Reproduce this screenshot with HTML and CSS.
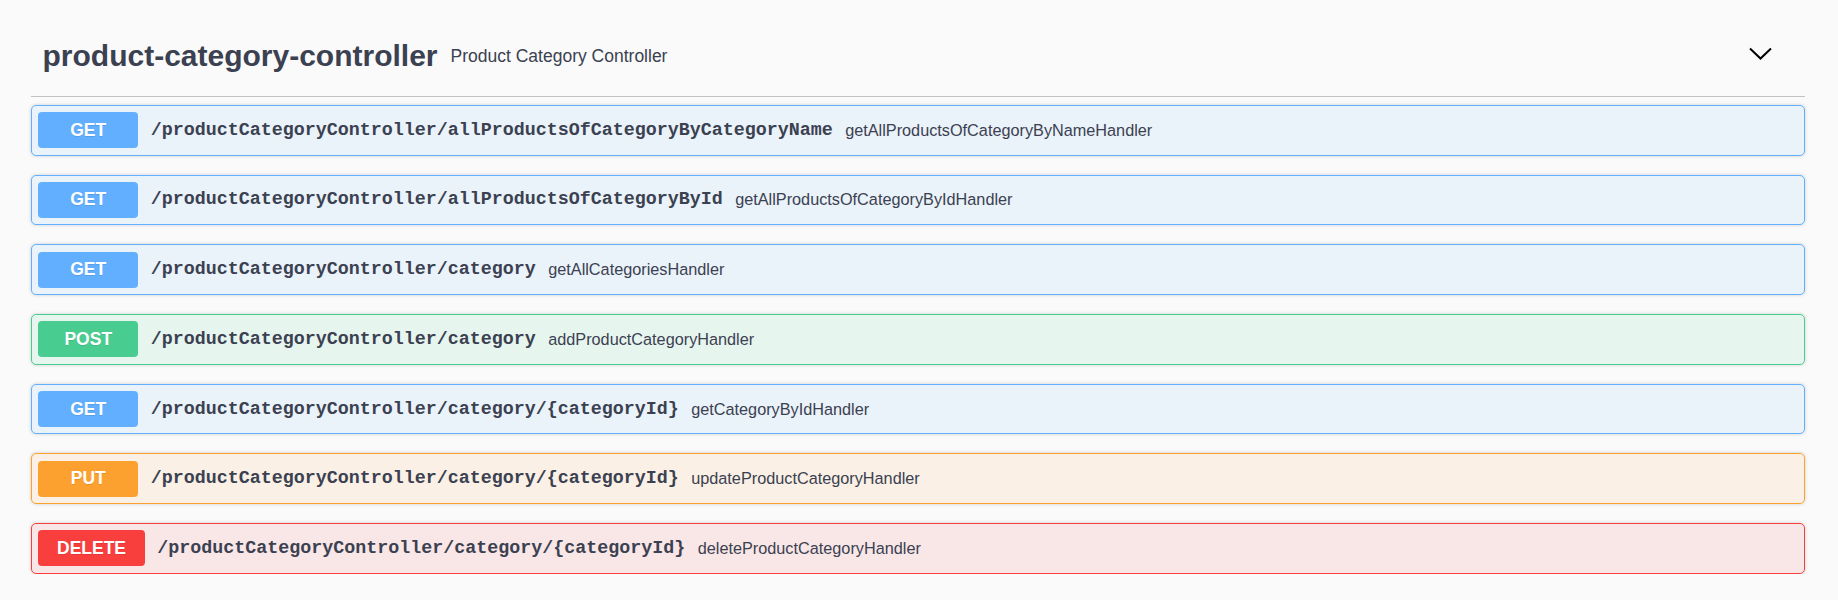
FILE: index.html
```html
<!DOCTYPE html>
<html lang="en">
<head>
<meta charset="utf-8">
<title>product-category-controller</title>
<link rel="stylesheet" href="styles.css">
</head>
<body>
<div class="wrapper">
  <section class="tag-section">
    <h3 class="tag">
      <span class="tag-name">product-category-controller</span>
      <small class="tag-desc">Product Category Controller</small>
      <span class="spacer"></span>
      <svg class="chevron" width="23" height="13" viewBox="0 0 23 13" aria-hidden="true">
        <polyline points="1,1.5 11.5,11.5 22,1.5" fill="none" stroke="#000" stroke-width="2"/>
      </svg>
    </h3>
    <div class="ops">
      <div class="op op-get">
        <span class="method">GET</span>
        <span class="path">/productCategoryController/allProductsOfCategoryByCategoryName</span>
        <span class="desc">getAllProductsOfCategoryByNameHandler</span>
      </div>
      <div class="op op-get">
        <span class="method">GET</span>
        <span class="path">/productCategoryController/allProductsOfCategoryById</span>
        <span class="desc">getAllProductsOfCategoryByIdHandler</span>
      </div>
      <div class="op op-get">
        <span class="method">GET</span>
        <span class="path">/productCategoryController/category</span>
        <span class="desc">getAllCategoriesHandler</span>
      </div>
      <div class="op op-post">
        <span class="method">POST</span>
        <span class="path">/productCategoryController/category</span>
        <span class="desc">addProductCategoryHandler</span>
      </div>
      <div class="op op-get">
        <span class="method">GET</span>
        <span class="path">/productCategoryController/category/{categoryId}</span>
        <span class="desc">getCategoryByIdHandler</span>
      </div>
      <div class="op op-put">
        <span class="method">PUT</span>
        <span class="path">/productCategoryController/category/{categoryId}</span>
        <span class="desc">updateProductCategoryHandler</span>
      </div>
      <div class="op op-delete">
        <span class="method">DELETE</span>
        <span class="path">/productCategoryController/category/{categoryId}</span>
        <span class="desc">deleteProductCategoryHandler</span>
      </div>
    </div>
  </section>
</div>
</body>
</html>
```

FILE: styles.css
```css
* { box-sizing: border-box; }

html, body {
  margin: 0;
  padding: 0;
  background: #fafafa;
}

body {
  font-family: "Liberation Sans", Arial, sans-serif;
  color: #3b4151;
}

.wrapper {
  padding: 16px 33px 0 31px;
}

.tag {
  display: flex;
  align-items: center;
  height: 81px;
  margin: 0 0 8px;
  padding: 12.5px 25px 12.5px 11.5px;
  border-bottom: 1px solid rgba(59, 65, 81, 0.3);
  font-size: 30px;
  font-weight: 700;
  color: #3b4151;
}

.tag-name {
  line-height: 34px;
}

.tag-desc {
  margin-left: 13px;
  font-size: 17.5px;
  font-weight: 400;
  color: #3b4151;
}

.spacer {
  flex: 1 1 auto;
}

.chevron {
  display: block;
  margin-right: 8px;
  margin-bottom: 6px;
}

.ops {
  display: flex;
  flex-direction: column;
  gap: 19.2px;
}

.op {
  display: flex;
  align-items: center;
  padding: 6.25px;
  border: 1px solid #000;
  border-radius: 5px;
  box-shadow: 0 0 3.75px rgba(0, 0, 0, 0.19);
}

.method {
  display: block;
  flex: none;
  height: 36px;
  min-width: 100px;
  padding: 7.5px 18.75px;
  border-radius: 4px;
  font-size: 17.5px;
  line-height: 21px;
  font-weight: 700;
  text-align: center;
  color: #fff;
  text-shadow: 0 1px 0 rgba(0, 0, 0, 0.1);
}

.path {
  padding: 0 12.5px;
  font-family: "Liberation Mono", "DejaVu Sans Mono", monospace;
  font-size: 18.33px;
  font-weight: 700;
  color: #3b4151;
  white-space: nowrap;
}

.desc {
  font-size: 16.25px;
  color: #3b4151;
}

.op-get { background: rgba(97, 175, 254, 0.1); border-color: #61affe; }
.op-get .method { background: #61affe; }

.op-post { background: rgba(73, 204, 144, 0.1); border-color: #49cc90; }
.op-post .method { background: #49cc90; }

.op-put { background: rgba(252, 161, 48, 0.1); border-color: #fca130; }
.op-put .method { background: #fca130; }

.op-delete { background: rgba(249, 62, 62, 0.1); border-color: #f93e3e; }
.op-delete .method { background: #f93e3e; }
```
